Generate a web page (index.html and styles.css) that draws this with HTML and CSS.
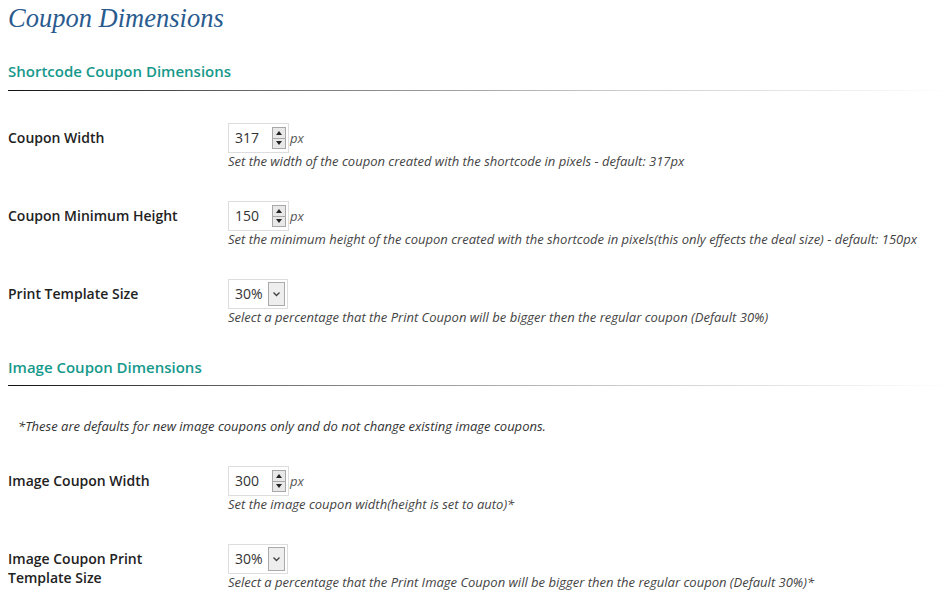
FILE: index.html
```html
<!DOCTYPE html>
<html>
<head>
<meta charset="utf-8">
<link rel="stylesheet" href="styles.css">
</head>
<body>
<h2 class="title">Coupon Dimensions</h2>

<h3 class="section first">Shortcode Coupon Dimensions</h3>
<div class="rule"></div>

<div class="row">
  <div class="label">Coupon Width</div>
  <div class="field">
    <div class="control">
      <div class="numbox"><span class="val">317</span><span class="spin"><span class="up"></span><span class="down"></span></span></div><span class="unit">px</span>
    </div>
    <div class="desc">Set the width of the coupon created with the shortcode in pixels - default: 317px</div>
  </div>
</div>

<div class="row">
  <div class="label">Coupon Minimum Height</div>
  <div class="field">
    <div class="control">
      <div class="numbox"><span class="val">150</span><span class="spin"><span class="up"></span><span class="down"></span></span></div><span class="unit">px</span>
    </div>
    <div class="desc">Set the minimum height of the coupon created with the shortcode in pixels(this only effects the deal size) - default: 150px</div>
  </div>
</div>

<div class="row">
  <div class="label">Print Template Size</div>
  <div class="field">
    <div class="control">
      <div class="selbox"><span class="val">30%</span><span class="arrow"><svg width="9" height="6" viewBox="0 0 9 6"><path d="M1.5 1.5 L4.5 4.5 L7.5 1.5" fill="none" stroke="#444" stroke-width="1.4"/></svg></span></div>
    </div>
    <div class="desc">Select a percentage that the Print Coupon will be bigger then the regular coupon (Default 30%)</div>
  </div>
</div>

<h3 class="section">Image Coupon Dimensions</h3>
<div class="rule"></div>

<p class="note">*These are defaults for new image coupons only and do not change existing image coupons.</p>

<div class="row">
  <div class="label">Image Coupon Width</div>
  <div class="field">
    <div class="control">
      <div class="numbox"><span class="val">300</span><span class="spin"><span class="up"></span><span class="down"></span></span></div><span class="unit">px</span>
    </div>
    <div class="desc">Set the image coupon width(height is set to auto)*</div>
  </div>
</div>

<div class="row">
  <div class="label">Image Coupon Print<br>Template Size</div>
  <div class="field">
    <div class="control">
      <div class="selbox"><span class="val">30%</span><span class="arrow"><svg width="9" height="6" viewBox="0 0 9 6"><path d="M1.5 1.5 L4.5 4.5 L7.5 1.5" fill="none" stroke="#444" stroke-width="1.4"/></svg></span></div>
    </div>
    <div class="desc">Select a percentage that the Print Image Coupon will be bigger then the regular coupon (Default 30%)*</div>
  </div>
</div>
</body>
</html>
```

FILE: styles.css
```css
html, body {
  margin: 0;
  padding: 0;
  background: #fff;
}
body {
  padding: 0 8px;
  font-family: "Open Sans", "Noto Sans", sans-serif;
  color: #222;
  overflow: hidden;
}
.title {
  margin: 0;
  font-family: "Liberation Serif", serif;
  font-style: italic;
  font-weight: normal;
  font-size: 26.5px;
  line-height: 36px;
  color: #2a5b8f;
}
.section {
  margin: 15px 0 0;
  font-size: 15px;
  font-weight: 600;
  line-height: 20px;
  color: #16998b;
}
.section.first {
  margin-top: 25px;
}
.rule {
  height: 1px;
  margin-top: 8px;
  margin-right: -8px;
  background: linear-gradient(to right, #111 0%, #777 30%, #ccc 65%, #fff 100%);
}
.section.first + .rule {
  margin-top: 9px;
  margin-bottom: 17px;
}
.row {
  display: grid;
  grid-template-columns: 220px 1fr;
  padding: 15px 0 16px;
}
.label {
  font-size: 14px;
  font-weight: 600;
  line-height: 19px;
  padding-top: 5px;
  color: #222;
}
.control {
  display: flex;
  align-items: center;
  height: 30px;
}
.numbox, .selbox {
  box-sizing: border-box;
  height: 30px;
  border: 1px solid #ddd;
  display: flex;
  align-items: center;
  position: relative;
  background: #fff;
}
.numbox {
  width: 61px;
}
.selbox {
  width: 60px;
}
.val {
  font-size: 14px;
  color: #333;
  padding-left: 6px;
  line-height: 20px;
}
.spin {
  position: absolute;
  right: 2px;
  top: 3px;
  width: 14px;
  height: 22px;
  box-sizing: border-box;
  border: 1px solid #a8a8a8;
  background: #e8e8e8;
  display: flex;
  flex-direction: column;
}
.spin .up, .spin .down {
  flex: 1;
  position: relative;
}
.spin .up {
  border-bottom: 1px solid #a8a8a8;
}
.spin .up::after, .spin .down::after {
  content: "";
  position: absolute;
  left: 50%;
  top: 50%;
  margin-left: -3px;
  border-left: 3px solid transparent;
  border-right: 3px solid transparent;
}
.spin .up::after {
  margin-top: -2px;
  border-bottom: 4px solid #222;
}
.spin .down::after {
  margin-top: -2px;
  border-top: 4px solid #222;
}
.unit {
  font-size: 13px;
  font-style: italic;
  color: #555;
  padding-left: 1px;
}
.arrow {
  position: absolute;
  right: 2px;
  top: 2px;
  width: 17px;
  height: 24px;
  box-sizing: border-box;
  border: 1px solid #aaa;
  background: #eee;
  display: flex;
  align-items: center;
  justify-content: center;
}
.desc {
  font-size: 13px;
  font-style: italic;
  line-height: 17px;
  color: #444;
}
.note {
  margin: 32px 0 16px;
  padding-left: 10px;
  font-size: 13px;
  font-style: italic;
  line-height: 17px;
  color: #333;
}
```
